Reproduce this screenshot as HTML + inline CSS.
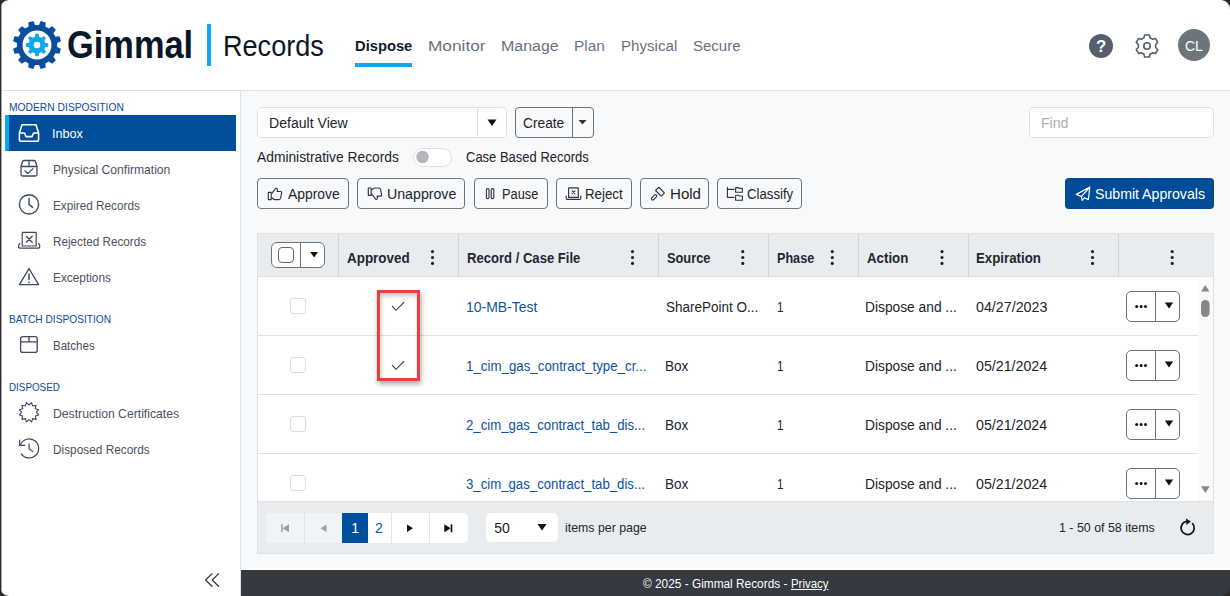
<!DOCTYPE html><html><head><meta charset="utf-8"><style>
html,body{margin:0;padding:0;width:1230px;height:596px;overflow:hidden;background:#f8f9fa;position:relative}
.b{position:absolute;box-sizing:border-box}
.t{position:absolute;white-space:nowrap;font-family:"Liberation Sans",sans-serif;transform-origin:0 0}
svg{overflow:visible}
</style></head><body>
<div class="b" style="left:0px;top:0px;width:1230px;height:90px;background:#fff"></div>
<div class="b" style="left:0px;top:90px;width:1230px;height:1px;background:#dee2e6"></div>
<svg class="b" style="left:0;top:0" width="1230" height="596" viewBox="0 0 1230 596"><path fill-rule="evenodd" fill="#0a4f9e" d="M38.97,24.90 L40.70,21.08 L45.75,22.44 L45.34,26.60 L48.76,28.58 L52.16,26.14 L55.86,29.84 L53.42,33.24 L55.40,36.66 L59.56,36.25 L60.92,41.30 L57.10,43.03 L57.10,46.97 L60.92,48.70 L59.56,53.75 L55.40,53.34 L53.42,56.76 L55.86,60.16 L52.16,63.86 L48.76,61.42 L45.34,63.40 L45.75,67.56 L40.70,68.92 L38.97,65.10 L35.03,65.10 L33.30,68.92 L28.25,67.56 L28.66,63.40 L25.24,61.42 L21.84,63.86 L18.14,60.16 L20.58,56.76 L18.60,53.34 L14.44,53.75 L13.08,48.70 L16.90,46.97 L16.90,43.03 L13.08,41.30 L14.44,36.25 L18.60,36.66 L20.58,33.24 L18.14,29.84 L21.84,26.14 L25.24,28.58 L28.66,26.60 L28.25,22.44 L33.30,21.08 L35.03,24.90 Z M22.5,45 a14.5,14.5 0 1,0 29.0,0 a14.5,14.5 0 1,0 -29.0,0 Z"/><path fill-rule="evenodd" fill="#12a7f2" d="M34.99,36.64 L35.31,33.83 L38.69,33.83 L39.01,36.64 L41.49,37.67 L43.71,35.90 L46.10,38.29 L44.33,40.51 L45.36,42.99 L48.17,43.31 L48.17,46.69 L45.36,47.01 L44.33,49.49 L46.10,51.71 L43.71,54.10 L41.49,52.33 L39.01,53.36 L38.69,56.17 L35.31,56.17 L34.99,53.36 L32.51,52.33 L30.29,54.10 L27.90,51.71 L29.67,49.49 L28.64,47.01 L25.83,46.69 L25.83,43.31 L28.64,42.99 L29.67,40.51 L27.90,38.29 L30.29,35.90 L32.51,37.67 Z M33.7,45 a3.3,3.3 0 1,0 6.6,0 a3.3,3.3 0 1,0 -6.6,0 Z"/></svg>
<div class="t" style="left:67.12px;top:23.00px;font-size:38.6px;line-height:43px;color:#0b1629;font-weight:bold;transform:scaleX(0.8915);">Gimmal</div>
<div class="b" style="left:207px;top:24px;width:4px;height:42px;background:#0aa6f7"></div>
<div class="t" style="left:222.63px;top:30.00px;font-size:29px;line-height:32px;color:#0b1629;transform:scaleX(0.9332);">Records</div>
<div class="t" style="left:355.24px;top:37.00px;font-size:15.5px;line-height:17px;color:#111a2b;font-weight:bold;transform:scaleX(0.9499);">Dispose</div>
<div class="t" style="left:428.02px;top:37.00px;font-size:15.5px;line-height:17px;color:#6b7280;transform:scaleX(1.1128);">Monitor</div>
<div class="t" style="left:501.02px;top:37.00px;font-size:15.5px;line-height:17px;color:#6b7280;transform:scaleX(1.0297);">Manage</div>
<div class="t" style="left:574.37px;top:37.00px;font-size:15.5px;line-height:17px;color:#6b7280;transform:scaleX(0.9947);">Plan</div>
<div class="t" style="left:620.79px;top:37.00px;font-size:15.5px;line-height:17px;color:#6b7280;transform:scaleX(0.9745);">Physical</div>
<div class="t" style="left:692.73px;top:37.00px;font-size:15.5px;line-height:17px;color:#6b7280;transform:scaleX(0.9672);">Secure</div>
<div class="b" style="left:355px;top:63px;width:57px;height:4px;background:#0aa6f7"></div>
<svg class="b" style="left:0;top:0" width="1230" height="100" viewBox="0 0 1230 100"><circle cx="1101" cy="46" r="12" fill="#555e6d"/><circle cx="1194" cy="45" r="16" fill="#6c757d"/></svg>
<div class="t" style="left:1096.04px;top:38.00px;font-size:16px;line-height:17px;color:#fff;font-weight:bold;transform:scaleX(1.0539);">?</div>
<div class="t" style="left:1185.30px;top:38.00px;font-size:14.5px;line-height:16px;color:#fff;transform:scaleX(0.9638);">CL</div>
<svg class="b" style="left:0;top:0" width="1230" height="100"><path d="M1143.99,37.73 L1144.65,34.95 L1149.35,34.95 L1150.01,37.73 L1152.66,39.26 L1155.40,38.44 L1157.75,42.51 L1155.67,44.47 L1155.67,47.53 L1157.75,49.49 L1155.40,53.56 L1152.66,52.74 L1150.01,54.27 L1149.35,57.05 L1144.65,57.05 L1143.99,54.27 L1141.34,52.74 L1138.60,53.56 L1136.25,49.49 L1138.33,47.53 L1138.33,44.47 L1136.25,42.51 L1138.60,38.44 L1141.34,39.26 Z" fill="none" stroke="#555e6d" stroke-width="1.6" stroke-linejoin="round"/><circle cx="1147" cy="46" r="3.2" fill="none" stroke="#555e6d" stroke-width="1.6"/></svg>
<div class="b" style="left:0px;top:91px;width:240px;height:505px;background:#fff"></div>
<div class="b" style="left:240px;top:91px;width:1px;height:505px;background:#dee2e6"></div>
<div class="t" style="left:8.88px;top:100.00px;font-size:11.6px;line-height:13px;color:#0b4a9c;transform:scaleX(0.8875);">MODERN DISPOSITION</div>
<div class="t" style="left:8.59px;top:312.00px;font-size:11.6px;line-height:13px;color:#0b4a9c;transform:scaleX(0.8765);">BATCH DISPOSITION</div>
<div class="t" style="left:8.61px;top:380.00px;font-size:11.6px;line-height:13px;color:#0b4a9c;transform:scaleX(0.8484);">DISPOSED</div>
<div class="b" style="left:5px;top:115px;width:231px;height:36px;background:#004e9c"></div>
<div class="b" style="left:5px;top:115px;width:4px;height:36px;background:#0aa6f7"></div>
<div class="t" style="left:52.26px;top:126.00px;font-size:13px;line-height:15px;color:#fff;transform:scaleX(0.9710);">Inbox</div>
<div class="t" style="left:52.63px;top:162.00px;font-size:13px;line-height:15px;color:#4a5363;transform:scaleX(0.9336);">Physical Confirmation</div>
<div class="t" style="left:52.66px;top:198.00px;font-size:13px;line-height:15px;color:#4a5363;transform:scaleX(0.9030);">Expired Records</div>
<div class="t" style="left:52.66px;top:234.00px;font-size:13px;line-height:15px;color:#4a5363;transform:scaleX(0.9013);">Rejected Records</div>
<div class="t" style="left:52.65px;top:270.00px;font-size:13px;line-height:15px;color:#4a5363;transform:scaleX(0.9118);">Exceptions</div>
<div class="t" style="left:52.68px;top:338.00px;font-size:13px;line-height:15px;color:#4a5363;transform:scaleX(0.8879);">Batches</div>
<div class="t" style="left:52.62px;top:406.00px;font-size:13px;line-height:15px;color:#4a5363;transform:scaleX(0.9386);">Destruction Certificates</div>
<div class="t" style="left:52.65px;top:442.00px;font-size:13px;line-height:15px;color:#4a5363;transform:scaleX(0.9110);">Disposed Records</div>
<svg class="b" style="left:0;top:0" width="241" height="596" fill="none" stroke-linecap="round" stroke-linejoin="round"><path d="M22,124.8 H36 L38.6,133 V139.5 Q38.6,141.2 37,141.2 H21 Q19.4,141.2 19.4,139.5 V133 Z M19.4,133 H24.5 L26,136.6 H32 L33.5,133 H38.6" stroke="#fff" stroke-width="1.6"/><path d="M21,166.5 H37 V174.5 Q37,176 35.5,176 H22.5 Q21,176 21,174.5 Z M21,166.5 L22.5,161.5 Q23,160.5 24,160.5 H34 Q35,160.5 35.5,161.5 L37,166.5 M29,160.5 V166.5 M25,171 L27.8,173.6 L33,168.6" stroke="#3d4a60" stroke-width="1.3"/><circle cx="29" cy="204.4" r="9.6" stroke="#3d4a60" stroke-width="1.4"/><path d="M29,198.5 V204.4 L32.6,207.4" stroke="#3d4a60" stroke-width="1.4"/><path d="M22.2,246 V233.2 Q22.2,232.4 23,232.4 H35.4 Q36.2,232.4 36.2,233.2 V246 Z M19.8,243.6 Q18.6,244.2 18.6,246.2 Q18.6,248.2 20.6,248.2 H37.8 Q39.8,248.2 39.8,246.2 Q39.8,244.2 38.6,243.6 M22.2,246 H36.2" stroke="#3d4a60" stroke-width="1.2"/><path d="M26.3,236.3 L32.2,242.2 M32.2,236.3 L26.3,242.2" stroke="#3d4a60" stroke-width="1.3"/><path d="M29,268.6 L38.6,284.6 H19.4 Z" stroke="#3d4a60" stroke-width="1.3"/><path d="M29,274 V279.4" stroke="#3d4a60" stroke-width="1.5"/><circle cx="29" cy="282.3" r="0.9" fill="#3d4a60"/><rect x="20.6" y="336.6" width="16.6" height="15.8" rx="2.2" stroke="#3d4a60" stroke-width="1.3"/><path d="M20.6,341.8 H37.2 M29,336.6 V341.8" stroke="#3d4a60" stroke-width="1.3"/></svg>
<svg class="b" style="left:0;top:0" width="241" height="596" fill="none" stroke="#3d4a60" stroke-width="1.2" stroke-linejoin="round" stroke-linecap="round"><path d="M31.59,402.64 L32.65,405.98 L36.07,405.23 L35.32,408.65 L38.66,409.71 L36.30,412.30 L38.66,414.89 L35.32,415.95 L36.07,419.37 L32.65,418.62 L31.59,421.96 L29.00,419.60 L26.41,421.96 L25.35,418.62 L21.93,419.37 L22.68,415.95 L19.34,414.89 L21.70,412.30 L19.34,409.71 L22.68,408.65 L21.93,405.23 L25.35,405.98 L26.41,402.64 L29.00,405.00 Z" stroke-width="1.1"/><path d="M20.6,444.4 A9.5,9.5 0 1,1 21.3,453.8" stroke-width="1.2"/><path d="M19.6,440.2 V445.4 H24.7" stroke-width="1.2"/><path d="M29.1,443.9 V448.7 L32.8,451.6" stroke-width="1.2"/><path d="M212,573.6 L205.6,580 L212,586.2 M218.6,573.6 L212.2,580 L218.6,586.2" stroke="#2f3a4d" stroke-width="1.3"/></svg>
<div class="b" style="left:241px;top:91px;width:989px;height:479px;background:#f8f9fa"></div>
<div class="b" style="left:257px;top:107px;width:250px;height:31px;background:#fff;border:1px solid #dde1e6;border-radius:5px"></div>
<div class="b" style="left:477px;top:108px;width:1px;height:29px;background:#dde1e6"></div>
<div class="t" style="left:269.37px;top:115.00px;font-size:14px;line-height:16px;color:#212529;transform:scaleX(1.0054);">Default View</div>
<svg class="b" style="left:0;top:0" width="1230" height="596"><path d="M487.5,119.5 H496.5 L492,126 Z" fill="#111"/><path d="M578.5,120 H586.5 L582.5,124.5 Z" fill="#333"/></svg>
<div class="b" style="left:515px;top:107px;width:79px;height:31px;border:1px solid #6c757d;border-radius:4px"></div>
<div class="b" style="left:572px;top:108px;width:1px;height:29px;background:#6c757d"></div>
<div class="t" style="left:523.31px;top:115.00px;font-size:14px;line-height:16px;color:#212529;transform:scaleX(0.9811);">Create</div>
<div class="b" style="left:1029px;top:107px;width:185px;height:31px;background:#fff;border:1px solid #dde1e6;border-radius:5px"></div>
<div class="t" style="left:1041.47px;top:115.00px;font-size:14px;line-height:16px;color:#a9afb6;transform:scaleX(1.0079);">Find</div>
<div class="t" style="left:257.10px;top:149.00px;font-size:14px;line-height:16px;color:#212529;transform:scaleX(0.9858);">Administrative Records</div>
<div class="b" style="left:413px;top:147.5px;width:38.5px;height:19.0px;background:#fff;border:1px solid #dde1e6;border-radius:10px"></div>
<svg class="b" style="left:0;top:0" width="1230" height="596"><circle cx="422.5" cy="157" r="6.2" fill="#b1b6bd"/></svg>
<div class="t" style="left:465.65px;top:149.00px;font-size:14px;line-height:16px;color:#212529;transform:scaleX(0.9282);">Case Based Records</div>
<div class="b" style="left:257px;top:178px;width:92px;height:31px;border:1px solid #6c757d;border-radius:4px"></div>
<div class="t" style="left:288.20px;top:186.00px;font-size:14px;line-height:16px;color:#212529;transform:scaleX(0.9899);">Approve</div>
<div class="b" style="left:357px;top:178px;width:108px;height:31px;border:1px solid #6c757d;border-radius:4px"></div>
<div class="t" style="left:386.64px;top:186.00px;font-size:14px;line-height:16px;color:#212529;transform:scaleX(1.0123);">Unapprove</div>
<div class="b" style="left:473.5px;top:178px;width:74.0px;height:31px;border:1px solid #6c757d;border-radius:4px"></div>
<div class="t" style="left:502.38px;top:186.00px;font-size:14px;line-height:16px;color:#212529;transform:scaleX(0.9146);">Pause</div>
<div class="b" style="left:556px;top:178px;width:75.5px;height:31px;border:1px solid #6c757d;border-radius:4px"></div>
<div class="t" style="left:585.44px;top:186.00px;font-size:14px;line-height:16px;color:#212529;transform:scaleX(0.9498);">Reject</div>
<div class="b" style="left:640.3px;top:178px;width:68.70000000000005px;height:31px;border:1px solid #6c757d;border-radius:4px"></div>
<div class="t" style="left:669.79px;top:186.00px;font-size:14px;line-height:16px;color:#212529;transform:scaleX(1.0770);">Hold</div>
<div class="b" style="left:717px;top:178px;width:85px;height:31px;border:1px solid #6c757d;border-radius:4px"></div>
<div class="t" style="left:746.94px;top:186.00px;font-size:14px;line-height:16px;color:#212529;transform:scaleX(0.9420);">Classify</div>
<div class="b" style="left:1065px;top:178px;width:149px;height:31px;background:#004c97;border-radius:4px"></div>
<div class="t" style="left:1095.36px;top:186.00px;font-size:14px;line-height:16px;color:#fff;transform:scaleX(1.0093);">Submit Approvals</div>
<div class="b" style="left:257px;top:233px;width:957px;height:321px;border:1px solid #dee2e6;background:#fff"></div>
<div class="b" style="left:258px;top:234px;width:955px;height:42px;background:#e9ecef"></div>
<div class="b" style="left:258px;top:276px;width:955px;height:1px;background:#dee2e6"></div>
<div class="b" style="left:338px;top:234px;width:1px;height:42px;background:#cfd4d9"></div>
<div class="b" style="left:458px;top:234px;width:1px;height:42px;background:#cfd4d9"></div>
<div class="b" style="left:658px;top:234px;width:1px;height:42px;background:#cfd4d9"></div>
<div class="b" style="left:768px;top:234px;width:1px;height:42px;background:#cfd4d9"></div>
<div class="b" style="left:858px;top:234px;width:1px;height:42px;background:#cfd4d9"></div>
<div class="b" style="left:968px;top:234px;width:1px;height:42px;background:#cfd4d9"></div>
<div class="b" style="left:1118px;top:234px;width:1px;height:42px;background:#cfd4d9"></div>
<div class="t" style="left:347.16px;top:250.00px;font-size:14px;line-height:16px;color:#1f2633;font-weight:bold;transform:scaleX(0.9586);">Approved</div>
<div class="t" style="left:466.75px;top:250.00px;font-size:14px;line-height:16px;color:#1f2633;font-weight:bold;transform:scaleX(0.9335);">Record / Case File</div>
<div class="t" style="left:667.02px;top:250.00px;font-size:14px;line-height:16px;color:#1f2633;font-weight:bold;transform:scaleX(0.9151);">Source</div>
<div class="t" style="left:776.78px;top:250.00px;font-size:14px;line-height:16px;color:#1f2633;font-weight:bold;transform:scaleX(0.9013);">Phase</div>
<div class="t" style="left:867.27px;top:250.00px;font-size:14px;line-height:16px;color:#1f2633;font-weight:bold;transform:scaleX(0.9492);">Action</div>
<div class="t" style="left:976.44px;top:250.00px;font-size:14px;line-height:16px;color:#1f2633;font-weight:bold;transform:scaleX(0.9489);">Expiration</div>
<svg class="b" style="left:0;top:0" width="1230" height="596"><circle cx="432.5" cy="251.6" r="1.55" fill="#1a1f29"/><circle cx="432.5" cy="257.5" r="1.55" fill="#1a1f29"/><circle cx="432.5" cy="263.4" r="1.55" fill="#1a1f29"/><circle cx="632.5" cy="251.6" r="1.55" fill="#1a1f29"/><circle cx="632.5" cy="257.5" r="1.55" fill="#1a1f29"/><circle cx="632.5" cy="263.4" r="1.55" fill="#1a1f29"/><circle cx="742.8" cy="251.6" r="1.55" fill="#1a1f29"/><circle cx="742.8" cy="257.5" r="1.55" fill="#1a1f29"/><circle cx="742.8" cy="263.4" r="1.55" fill="#1a1f29"/><circle cx="832.3" cy="251.6" r="1.55" fill="#1a1f29"/><circle cx="832.3" cy="257.5" r="1.55" fill="#1a1f29"/><circle cx="832.3" cy="263.4" r="1.55" fill="#1a1f29"/><circle cx="942" cy="251.6" r="1.55" fill="#1a1f29"/><circle cx="942" cy="257.5" r="1.55" fill="#1a1f29"/><circle cx="942" cy="263.4" r="1.55" fill="#1a1f29"/><circle cx="1092.5" cy="251.6" r="1.55" fill="#1a1f29"/><circle cx="1092.5" cy="257.5" r="1.55" fill="#1a1f29"/><circle cx="1092.5" cy="263.4" r="1.55" fill="#1a1f29"/><circle cx="1172.2" cy="251.6" r="1.55" fill="#1a1f29"/><circle cx="1172.2" cy="257.5" r="1.55" fill="#1a1f29"/><circle cx="1172.2" cy="263.4" r="1.55" fill="#1a1f29"/></svg>
<div class="b" style="left:271px;top:242px;width:54px;height:26px;background:#fff;border:1px solid #6c757d;border-radius:6px"></div>
<div class="b" style="left:300px;top:243px;width:1px;height:24px;background:#6c757d"></div>
<div class="b" style="left:278px;top:247px;width:16px;height:16px;border:1px solid #5f6670;border-radius:4px"></div>
<svg class="b" style="left:0;top:0" width="1230" height="596"><path d="M310.2,252 H318 L314.1,257.4 Z" fill="#111"/></svg>
<div class="b" style="left:258px;top:335px;width:940px;height:1px;background:#dee2e6"></div>
<div class="b" style="left:290px;top:298px;width:16px;height:16px;border:1px solid #d9dde2;border-radius:3px;background:#fff"></div>
<div class="t" style="left:465.75px;top:299.00px;font-size:14px;line-height:16px;color:#0d53a2;transform:scaleX(0.9969);">10-MB-Test</div>
<div class="t" style="left:665.89px;top:299.00px;font-size:14px;line-height:16px;color:#212529;transform:scaleX(0.9648);">SharePoint O...</div>
<div class="t" style="left:776.52px;top:299.00px;font-size:14px;line-height:16px;color:#212529;transform:scaleX(0.8374);">1</div>
<div class="t" style="left:865.40px;top:299.00px;font-size:14px;line-height:16px;color:#212529;transform:scaleX(0.9835);">Dispose and ...</div>
<div class="t" style="left:975.93px;top:299.00px;font-size:14px;line-height:16px;color:#212529;transform:scaleX(1.0181);">04/27/2023</div>
<div class="b" style="left:1126px;top:291px;width:54px;height:31px;background:#fff;border:1px solid #6c757d;border-radius:5px"></div>
<div class="b" style="left:1155px;top:292px;width:1px;height:29px;background:#6c757d"></div>
<div class="b" style="left:258px;top:394px;width:940px;height:1px;background:#dee2e6"></div>
<div class="b" style="left:290px;top:357px;width:16px;height:16px;border:1px solid #d9dde2;border-radius:3px;background:#fff"></div>
<div class="t" style="left:465.80px;top:358.00px;font-size:14px;line-height:16px;color:#0d53a2;transform:scaleX(0.9502);">1_cim_gas_contract_type_cr...</div>
<div class="t" style="left:665.41px;top:358.00px;font-size:14px;line-height:16px;color:#212529;transform:scaleX(0.9699);">Box</div>
<div class="t" style="left:776.52px;top:358.00px;font-size:14px;line-height:16px;color:#212529;transform:scaleX(0.8374);">1</div>
<div class="t" style="left:865.40px;top:358.00px;font-size:14px;line-height:16px;color:#212529;transform:scaleX(0.9835);">Dispose and ...</div>
<div class="t" style="left:975.93px;top:358.00px;font-size:14px;line-height:16px;color:#212529;transform:scaleX(1.0161);">05/21/2024</div>
<div class="b" style="left:1126px;top:350px;width:54px;height:31px;background:#fff;border:1px solid #6c757d;border-radius:5px"></div>
<div class="b" style="left:1155px;top:351px;width:1px;height:29px;background:#6c757d"></div>
<div class="b" style="left:258px;top:453px;width:940px;height:1px;background:#dee2e6"></div>
<div class="b" style="left:290px;top:416px;width:16px;height:16px;border:1px solid #d9dde2;border-radius:3px;background:#fff"></div>
<div class="t" style="left:466.14px;top:417.00px;font-size:14px;line-height:16px;color:#0d53a2;transform:scaleX(0.9432);">2_cim_gas_contract_tab_dis...</div>
<div class="t" style="left:665.41px;top:417.00px;font-size:14px;line-height:16px;color:#212529;transform:scaleX(0.9699);">Box</div>
<div class="t" style="left:776.52px;top:417.00px;font-size:14px;line-height:16px;color:#212529;transform:scaleX(0.8374);">1</div>
<div class="t" style="left:865.40px;top:417.00px;font-size:14px;line-height:16px;color:#212529;transform:scaleX(0.9835);">Dispose and ...</div>
<div class="t" style="left:975.93px;top:417.00px;font-size:14px;line-height:16px;color:#212529;transform:scaleX(1.0161);">05/21/2024</div>
<div class="b" style="left:1126px;top:409px;width:54px;height:31px;background:#fff;border:1px solid #6c757d;border-radius:5px"></div>
<div class="b" style="left:1155px;top:410px;width:1px;height:29px;background:#6c757d"></div>
<div class="b" style="left:290px;top:475px;width:16px;height:16px;border:1px solid #d9dde2;border-radius:3px;background:#fff"></div>
<div class="t" style="left:466.27px;top:476.00px;font-size:14px;line-height:16px;color:#0d53a2;transform:scaleX(0.9425);">3_cim_gas_contract_tab_dis...</div>
<div class="t" style="left:665.41px;top:476.00px;font-size:14px;line-height:16px;color:#212529;transform:scaleX(0.9699);">Box</div>
<div class="t" style="left:776.52px;top:476.00px;font-size:14px;line-height:16px;color:#212529;transform:scaleX(0.8374);">1</div>
<div class="t" style="left:865.40px;top:476.00px;font-size:14px;line-height:16px;color:#212529;transform:scaleX(0.9835);">Dispose and ...</div>
<div class="t" style="left:975.93px;top:476.00px;font-size:14px;line-height:16px;color:#212529;transform:scaleX(1.0161);">05/21/2024</div>
<div class="b" style="left:1126px;top:468px;width:54px;height:31px;background:#fff;border:1px solid #6c757d;border-radius:5px"></div>
<div class="b" style="left:1155px;top:469px;width:1px;height:29px;background:#6c757d"></div>
<svg class="b" style="left:0;top:0" width="1230" height="596"><circle cx="1136.7" cy="306.5" r="1.5" fill="#111"/><circle cx="1141.1" cy="306.5" r="1.5" fill="#111"/><circle cx="1145.5" cy="306.5" r="1.5" fill="#111"/><path d="M1164.8,302.6 H1173.2 L1169,308.4 Z" fill="#111"/><path d="M392,305.8 L396,310.3 L404.2,302.2" fill="none" stroke="#2b3340" stroke-width="1.05"/><circle cx="1136.7" cy="365.5" r="1.5" fill="#111"/><circle cx="1141.1" cy="365.5" r="1.5" fill="#111"/><circle cx="1145.5" cy="365.5" r="1.5" fill="#111"/><path d="M1164.8,361.6 H1173.2 L1169,367.4 Z" fill="#111"/><path d="M392,364.8 L396,369.3 L404.2,361.2" fill="none" stroke="#2b3340" stroke-width="1.05"/><circle cx="1136.7" cy="424.5" r="1.5" fill="#111"/><circle cx="1141.1" cy="424.5" r="1.5" fill="#111"/><circle cx="1145.5" cy="424.5" r="1.5" fill="#111"/><path d="M1164.8,420.6 H1173.2 L1169,426.4 Z" fill="#111"/><circle cx="1136.7" cy="483.5" r="1.5" fill="#111"/><circle cx="1141.1" cy="483.5" r="1.5" fill="#111"/><circle cx="1145.5" cy="483.5" r="1.5" fill="#111"/><path d="M1164.8,479.6 H1173.2 L1169,485.4 Z" fill="#111"/></svg>
<div class="b" style="left:1198px;top:277px;width:15px;height:224px;background:#fafafa"></div>
<svg class="b" style="left:0;top:0" width="1230" height="596"><path d="M1201,291.5 H1209.5 L1205.25,285 Z" fill="#888"/><rect x="1201" y="300" width="8.6" height="17" rx="4.3" fill="#878787"/><path d="M1201,486.2 H1209.8 L1205.4,493 Z" fill="#888"/></svg>
<div class="b" style="left:377px;top:290px;width:43px;height:90.5px;border:3.2px solid #f03e3e;box-shadow:1px 3px 5px rgba(0,0,0,0.35), inset 1px 3px 4px rgba(0,0,0,0.22)"></div>
<div class="b" style="left:258px;top:501px;width:955px;height:52px;background:#e9ecef"></div>
<div class="b" style="left:258px;top:501px;width:955px;height:1px;background:#dee2e6"></div>
<div class="b" style="left:266.5px;top:512.5px;width:201.0px;height:30.0px;background:#fff;border-radius:5px;overflow:hidden"></div>
<div class="b" style="left:266.5px;top:512.5px;width:75.5px;height:30.0px;background:#f1f3f5;border-radius:5px 0 0 5px"></div>
<div class="b" style="left:342px;top:512.5px;width:26px;height:30.0px;background:#004f9f"></div>
<div class="b" style="left:304px;top:512.5px;width:1px;height:30.0px;background:#e2e5e9"></div>
<div class="b" style="left:391px;top:512.5px;width:1px;height:30.0px;background:#e2e5e9"></div>
<div class="b" style="left:429px;top:512.5px;width:1px;height:30.0px;background:#e2e5e9"></div>
<div class="t" style="left:351.25px;top:520.00px;font-size:14px;line-height:16px;color:#fff;">1</div>
<div class="t" style="left:374.90px;top:520.00px;font-size:14px;line-height:16px;color:#0d53a2;">2</div>
<svg class="b" style="left:0;top:0" width="1230" height="596"><rect x="281.1" y="524.3" width="1.5" height="8" fill="#9aa0a6"/><path d="M289,524.3 V532.3 L282.4,528.3 Z" fill="#9aa0a6"/><path d="M326.5,524.5 V532 L320.5,528.25 Z" fill="#9aa0a6"/><path d="M407,524.5 V532 L413,528.25 Z" fill="#111"/><rect x="450.7" y="524.3" width="1.6" height="8" fill="#111"/><path d="M444.3,524.3 V532.3 L450.7,528.3 Z" fill="#111"/></svg>
<div class="b" style="left:486px;top:513px;width:72px;height:29px;background:#fff;border-radius:5px"></div>
<svg class="b" style="left:0;top:0" width="1230" height="596"><path d="M537.5,524 H546.5 L542,530.5 Z" fill="#111"/></svg>
<div class="t" style="left:494.24px;top:520.00px;font-size:14px;line-height:16px;color:#212529;">50</div>
<div class="t" style="left:564.80px;top:520.00px;font-size:13px;line-height:15px;color:#212529;transform:scaleX(0.9496);">items per page</div>
<div class="t" style="left:1058.67px;top:520.00px;font-size:13px;line-height:15px;color:#212529;transform:scaleX(0.9536);">1 - 50 of 58 items</div>
<svg class="b" style="left:0;top:0" width="1230" height="596"><path d="M1192.2,523.2 A6.6,6.6 0 1,1 1186.8,521.4" fill="none" stroke="#111827" stroke-width="1.8"/><path d="M1186,518.4 L1191,521.6 L1186.4,525" fill="#111827"/></svg>
<div class="b" style="left:241px;top:570px;width:989px;height:26px;background:#343a40"></div>
<div class="b" style="left:241px;top:569px;width:989px;height:1px;background:#fff"></div>
<div class="t" style="left:643.12px;top:577.00px;font-size:12.5px;line-height:14px;color:#fff;transform:scaleX(0.9481);">© 2025 - Gimmal Records -</div>
<div class="t" style="left:790.59px;top:577.00px;font-size:12.5px;line-height:14px;color:#fff;transform:scaleX(0.9125);text-decoration:underline">Privacy</div>
<svg class="b" style="left:0;top:0" width="1230" height="596" fill="none" stroke-linejoin="round" stroke-linecap="round"><rect x="268.3" y="192.3" width="2.9" height="7.3" rx="0.3" stroke="#2a3445" stroke-width="1.15"/><path d="M271.8,193.4 L274.8,189.6 Q275.6,187.9 276.8,188.4 Q277.7,188.9 277.4,190.4 L277.1,191.5 H280.6 Q281.9,191.7 281.6,193.1 L280.6,198 Q280.3,199.6 279,199.6 H275 Q273.3,199.6 271.8,197.6" stroke="#2a3445" stroke-width="1.15"/><g transform="translate(100,387.6) scale(1,-1)"><rect x="268.3" y="192.3" width="2.9" height="7.3" rx="0.3" stroke="#2a3445" stroke-width="1.15"/><path d="M271.8,193.4 L274.8,189.6 Q275.6,187.9 276.8,188.4 Q277.7,188.9 277.4,190.4 L277.1,191.5 H280.6 Q281.9,191.7 281.6,193.1 L280.6,198 Q280.3,199.6 279,199.6 H275 Q273.3,199.6 271.8,197.6" stroke="#2a3445" stroke-width="1.15"/></g><rect x="486.4" y="188.6" width="2.6" height="10" rx="1.2" stroke="#2a3445" stroke-width="1.1"/><rect x="491.2" y="188.6" width="2.6" height="10" rx="1.2" stroke="#2a3445" stroke-width="1.1"/><path d="M568.6,197.4 V188.4 Q568.6,187.9 569.1,187.9 H577.8 Q578.3,187.9 578.3,188.4 V197.4 H568.6 M566.2,196 V198.3 Q566.2,199.4 567.3,199.4 H579.7 Q580.8,199.4 580.8,198.3 V196" stroke="#2a3445" stroke-width="1.15"/><path d="M572.1,190.9 L574.9,193.7 M574.9,190.9 L572.1,193.7" stroke="#2a3445" stroke-width="1.1"/><g transform="rotate(45 660 191.7)"><rect x="656" y="189.4" width="8" height="4.6" rx="0.4" stroke="#2a3445" stroke-width="1.15"/></g><g transform="rotate(-45 654.1 197.3)"><rect x="650.9" y="196" width="6.4" height="2.6" rx="1.2" stroke="#2a3445" stroke-width="1.15"/></g><path d="M727.4,187.4 V197.4 H734 M727.4,189.4 H733.8" stroke="#2a3445" stroke-width="1.1"/><path d="M735.6,192.2 V188 Q735.6,187.6 736,187.6 H738.4 L739.2,188.4 H742 Q742.4,188.4 742.4,188.8 V192.2 Z" stroke="#2a3445" stroke-width="1.1"/><path d="M735.6,200.2 V195.6 Q735.6,195.2 736,195.2 H738.4 L739.2,196 H742 Q742.4,196 742.4,196.4 V200.2 Z" stroke="#2a3445" stroke-width="1.1"/><path d="M1089.8,187 L1076.4,194.4 L1081.4,196.6 L1082.2,200.4 L1084.4,197.8 L1088.4,199.6 Z M1089.8,187 L1081.4,196.6" stroke="#fff" stroke-width="1.2"/></svg>
<svg class="b" style="left:0;top:0" width="1230" height="596"><rect x="0" y="0" width="1.4" height="596" fill="#2b2b2b"/><path d="M0,0 H9 A9,9 0 0,0 0,9 Z" fill="#2b2b2b"/><path d="M1230,0 H1221 A9,9 0 0,1 1230,9 Z" fill="#2b2b2b"/><path d="M0,596 H9 A9,9 0 0,1 0,587 Z" fill="#2b2b2b"/><path d="M1230,596 H1221 A9,9 0 0,0 1230,587 Z" fill="#2b2b2b"/></svg>
</body></html>
